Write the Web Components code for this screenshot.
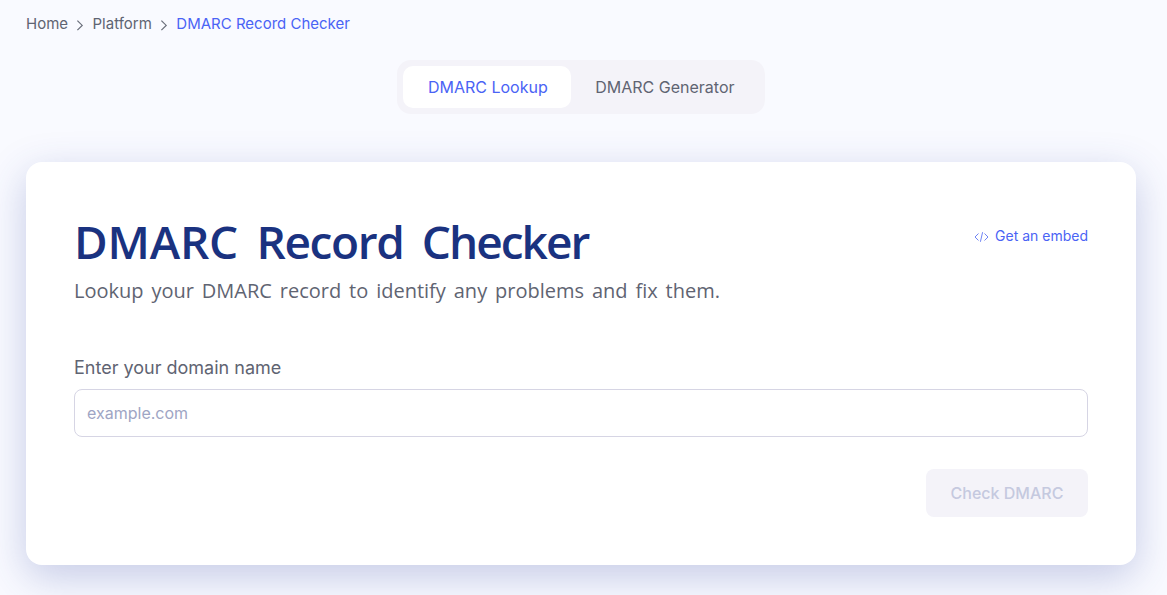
<!DOCTYPE html>
<html lang="en">
<head>
<meta charset="utf-8">
<title>DMARC Record Checker</title>
<style>
  html, body { margin: 0; height: 100%; overflow: hidden; }
  body { background: #f9faff; font-family: Inter, "Noto Sans", sans-serif; color: #5f6472; }
  .w-caps { letter-spacing: -0.2px; }
  .w-mid { letter-spacing: -1.4px; }
  .w-end { letter-spacing: -2px; }
</style>
</head>
<body>
<dmarc-page>
  <bread-crumbs>
    <a>Home</a>
    <a>Platform</a>
    <a current>DMARC Record Checker</a>
  </bread-crumbs>
  <tab-switch>
    <tab-item active>DMARC Lookup</tab-item>
    <tab-item>DMARC Generator</tab-item>
  </tab-switch>
  <checker-card>
    <span slot="title"><span class="w-caps">DMARC</span> <span class="w-mid">Record</span> <span class="w-end">Checker</span></span>
    <span slot="subtitle">Lookup your DMARC record to identify any problems and fix them.</span>
    <embed-link slot="action">Get an embed</embed-link>
    <domain-form label="Enter your domain name" placeholder="example.com" button="Check DMARC"></domain-form>
  </checker-card>
</dmarc-page>

<script>
const chevron = `<svg width="16" height="16" viewBox="0 0 16 16" fill="none" stroke="#6a6f7b" stroke-width="1.2"><path d="M5.4 4.6 10.2 9.4 5.4 14.2"/></svg>`;

class DmarcPage extends HTMLElement {
	constructor() {
		super();
		this.attachShadow({ mode: "open" }).innerHTML = `
<style>
  :host { display: flex; flex-direction: column; padding: 14px 31px 0 26px; }
</style>
<slot></slot>`;
	}
}

class BreadCrumbs extends HTMLElement {
	connectedCallback() {
		this.attachShadow({ mode: "open" });
		const items = [...this.querySelectorAll("a")].map((a) => {
			const cls = a.hasAttribute("current") ? "current" : "";
			return `<span class="${cls}">${a.textContent}</span>`;
		});
		this.shadowRoot.innerHTML = `
<style>
  :host { display: flex; align-items: center; gap: 4.25px; height: 20px; font-size: 15px; line-height: 20px; color: #5f6472; }
  .current { color: #4a63f5; }
  svg { display: block; }
</style>
${items.join(chevron)}`;
	}
}

class TabSwitch extends HTMLElement {
	constructor() {
		super();
		this.attachShadow({ mode: "open" }).innerHTML = `
<style>
  :host { display: flex; align-self: center; margin: 26px 0 48px; padding: 6px; height: 42px; background: #f4f3f9; border-radius: 14px; }
</style>
<slot></slot>`;
	}
}

class TabItem extends HTMLElement {
	constructor() {
		super();
		this.attachShadow({ mode: "open" }).innerHTML = `
<style>
  :host { display: block; padding: 0 24px; height: 42px; line-height: 42px; font-size: 16px; border-radius: 10px; color: #5f6472; }
  :host([active]) { padding: 0 23.5px 0 24.5px; background: #fff; color: #4a63f5; }
</style>
<slot></slot>`;
	}
}

class CheckerCard extends HTMLElement {
	constructor() {
		super();
		this.attachShadow({ mode: "open" }).innerHTML = `
<style>
  :host { display: block; height: 403px; box-sizing: border-box; padding: 48px; background: #fff; border-radius: 16px; box-shadow: 0 12px 40px rgba(50, 70, 160, 0.26); }
  header { display: flex; justify-content: space-between; align-items: flex-start; }
  h1 { margin: 0 0 3px; font: 600 46px/62px "Open Sans", sans-serif; color: #1a3280; word-spacing: 6.5px; }
  p { margin: 0; font: 400 20px/32px "Open Sans", sans-serif; color: #5f6472; word-spacing: 2.7px; }
</style>
<header>
  <div>
    <h1><slot name="title"></slot></h1>
    <p><slot name="subtitle"></slot></p>
  </div>
  <slot name="action"></slot>
</header>
<slot></slot>`;
	}
}

class EmbedLink extends HTMLElement {
	constructor() {
		super();
		this.attachShadow({ mode: "open" }).innerHTML = `
<style>
  :host { display: flex; align-items: center; gap: 6px; margin-top: 16px; font-size: 14px; line-height: 20px; color: #4a63f5; }
  svg { display: block; }
</style>
<svg width="15" height="15" viewBox="0 0 15 15" fill="none" stroke="#6f84f5" stroke-width="1"><path d="M4.5 4.5 1 8 4.5 11.5M10.5 4.5 14 8 10.5 11.5M8.6 3.2 6.4 12.8"/></svg>
<slot></slot>`;
	}
}

class DomainForm extends HTMLElement {
	connectedCallback() {
		this.attachShadow({ mode: "open" }).innerHTML = `
<style>
  :host { display: block; margin-top: 49px; }
  label { display: block; font-size: 18px; line-height: 24px; color: #5f6472; margin-bottom: 9px; }
  input { display: block; box-sizing: border-box; width: 100%; height: 48px; padding: 0 12px; border: 1px solid #d6d5e4; border-radius: 8px; background: #fff; font: 400 16px Inter, sans-serif; outline: none; }
  input::placeholder { color: #9ea5c4; opacity: 1; }
  .row { display: flex; justify-content: flex-end; margin-top: 32px; }
  button { width: 162px; height: 48px; border: none; border-radius: 8px; background: #f4f3f9; color: #c5c9df; font: 500 16px Inter, sans-serif; }
</style>
<label for="domain">${this.getAttribute("label")}</label>
<input id="domain" type="text" placeholder="${this.getAttribute("placeholder")}">
<div class="row"><button type="button" disabled>${this.getAttribute("button")}</button></div>`;
	}
}

customElements.define("dmarc-page", DmarcPage);
customElements.define("bread-crumbs", BreadCrumbs);
customElements.define("tab-switch", TabSwitch);
customElements.define("tab-item", TabItem);
customElements.define("checker-card", CheckerCard);
customElements.define("embed-link", EmbedLink);
customElements.define("domain-form", DomainForm);
</script>
</body>
</html>
